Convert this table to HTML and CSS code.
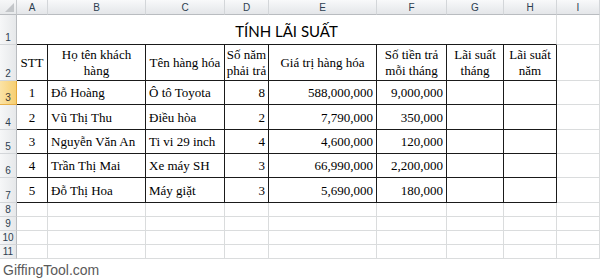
FILE: index.html
```html
<!DOCTYPE html>
<html lang="vi">
<head>
<meta charset="utf-8">
<title>Tính lãi suất</title>
<link rel="stylesheet" href="styles.css">
</head>
<body>
<div class="sheet">
  <div class="grid">
    <div class="corner"><span class="tri"></span></div>
    <div class="ch">A</div>
    <div class="ch">B</div>
    <div class="ch">C</div>
    <div class="ch">D</div>
    <div class="ch">E</div>
    <div class="ch">F</div>
    <div class="ch">G</div>
    <div class="ch">H</div>
    <div class="ch">I</div>

    <div class="rh">1</div>
    <div class="title">TÍNH LÃI SUẤT</div>
    <div class="c"></div>

    <div class="rh">2</div>
    <div class="c t hd">STT</div>
    <div class="c t hd">Họ tên khách<br>hàng</div>
    <div class="c t hd">Tên hàng hóa</div>
    <div class="c t hd">Số năm<br>phải trả</div>
    <div class="c t hd">Giá trị hàng hóa</div>
    <div class="c t hd">Số tiền trả<br>mỗi tháng</div>
    <div class="c t hd">Lãi suất<br>tháng</div>
    <div class="c t hd">Lãi suất<br>năm</div>
    <div class="c"></div>

    <div class="rh sel">3</div>
    <div class="c t ctr">1</div>
    <div class="c t">Đỗ Hoàng</div>
    <div class="c t">Ô tô Toyota</div>
    <div class="c t num">8</div>
    <div class="c t num">588,000,000</div>
    <div class="c t num">9,000,000</div>
    <div class="c t"></div>
    <div class="c t"></div>
    <div class="c"></div>

    <div class="rh">4</div>
    <div class="c t ctr">2</div>
    <div class="c t">Vũ Thị Thu</div>
    <div class="c t">Điều hòa</div>
    <div class="c t num">2</div>
    <div class="c t num">7,790,000</div>
    <div class="c t num">350,000</div>
    <div class="c t"></div>
    <div class="c t"></div>
    <div class="c"></div>

    <div class="rh">5</div>
    <div class="c t ctr">3</div>
    <div class="c t">Nguyễn Văn An</div>
    <div class="c t">Ti vi 29 inch</div>
    <div class="c t num">4</div>
    <div class="c t num">4,600,000</div>
    <div class="c t num">120,000</div>
    <div class="c t"></div>
    <div class="c t"></div>
    <div class="c"></div>

    <div class="rh">6</div>
    <div class="c t ctr">4</div>
    <div class="c t">Trần Thị Mai</div>
    <div class="c t">Xe máy SH</div>
    <div class="c t num">3</div>
    <div class="c t num">66,990,000</div>
    <div class="c t num">2,200,000</div>
    <div class="c t"></div>
    <div class="c t"></div>
    <div class="c"></div>

    <div class="rh">7</div>
    <div class="c t ctr">5</div>
    <div class="c t">Đỗ Thị Hoa</div>
    <div class="c t">Máy giặt</div>
    <div class="c t num">3</div>
    <div class="c t num">5,690,000</div>
    <div class="c t num">180,000</div>
    <div class="c t"></div>
    <div class="c t"></div>
    <div class="c"></div>

    <div class="rh">8</div>
    <div class="c"></div><div class="c"></div><div class="c"></div><div class="c"></div><div class="c"></div><div class="c"></div><div class="c"></div><div class="c"></div><div class="c"></div>
    <div class="rh">9</div>
    <div class="c"></div><div class="c"></div><div class="c"></div><div class="c"></div><div class="c"></div><div class="c"></div><div class="c"></div><div class="c"></div><div class="c"></div>
    <div class="rh">10</div>
    <div class="c"></div><div class="c"></div><div class="c"></div><div class="c"></div><div class="c"></div><div class="c"></div><div class="c"></div><div class="c"></div><div class="c"></div>
    <div class="rh">11</div>
    <div class="c"></div><div class="c"></div><div class="c"></div><div class="c"></div><div class="c"></div><div class="c"></div><div class="c"></div><div class="c"></div><div class="c"></div>
  </div>
  <div class="watermark">GiffingTool.com</div>
</div>
</body>
</html>
```

FILE: styles.css
```css
* { box-sizing: border-box; }
html, body { margin: 0; padding: 0; background: #ffffff; }
.sheet { width: 600px; height: 280px; overflow: hidden; background: #ffffff; }
.grid {
  display: grid;
  grid-template-columns: 17px 31px 98px 79px 44px 108px 70px 57px 53px 43px;
  grid-template-rows: 15px 30px 36px 24px 25px 24px 24px 25px 14px 14px 14px 14px;
  font-family: "Liberation Serif", "Times New Roman", serif;
  font-size: 13px;
  color: #000;
}
.corner {
  position: relative;
  background: linear-gradient(#f6f7f8, #e6e8ea);
  border-right: 1px solid #c6c9cc;
  border-bottom: 1px solid #b9bcc0;
}
.tri {
  position: absolute;
  right: 2px;
  bottom: 2px;
  width: 0;
  height: 0;
  border-left: 9px solid transparent;
  border-bottom: 9px solid #c3c6c9;
}
.ch {
  background: linear-gradient(#f8f9fa, #e4e6e9);
  border-right: 1px solid #d3d6d9;
  border-bottom: 1px solid #b9bcc0;
  font-family: "Liberation Sans", Arial, sans-serif;
  font-size: 10px;
  color: #2c3e50;
  display: flex;
  align-items: center;
  justify-content: center;
}
.rh {
  background: linear-gradient(90deg, #f6f7f8, #e6e8ea);
  border-right: 1px solid #b9bcc0;
  border-bottom: 1px solid #d3d6d9;
  font-family: "Liberation Sans", Arial, sans-serif;
  font-size: 10px;
  color: #2c3e50;
  display: flex;
  align-items: flex-end;
  justify-content: center;
  padding-bottom: 1px;
  line-height: 11px;
}
.rh.sel {
  background: linear-gradient(90deg, #fbe3a6, #f6cf72);
  border-right: 1px solid #e3a93b;
  border-bottom: 1px solid #e8b04a;
  color: #3a3a3a;
}
.c {
  border-right: 1px solid #dadcdd;
  border-bottom: 1px solid #dadcdd;
  display: flex;
  align-items: center;
  padding: 0 3px;
  line-height: 15px;
  white-space: nowrap;
}
.title {
  grid-column: span 8;
  border-right: 1px solid #dadcdd;
  border-bottom: 1px solid #1a1a1a;
  display: flex;
  align-items: center;
  justify-content: center;
  font-family: Lato, "Liberation Sans", sans-serif;
  font-size: 15px;
  color: #000;
  padding-top: 2px;
}
.t { border-right-color: #1a1a1a; border-bottom-color: #1a1a1a; }
.hd { justify-content: center; text-align: center; line-height: 16px; }
.ctr { justify-content: center; }
.num { justify-content: flex-end; }
.watermark {
  font-family: "Liberation Sans", Arial, sans-serif;
  font-size: 14px;
  color: #5a5a5a;
  padding: 3px 0 0 3px;
  line-height: 16px;
}
```
